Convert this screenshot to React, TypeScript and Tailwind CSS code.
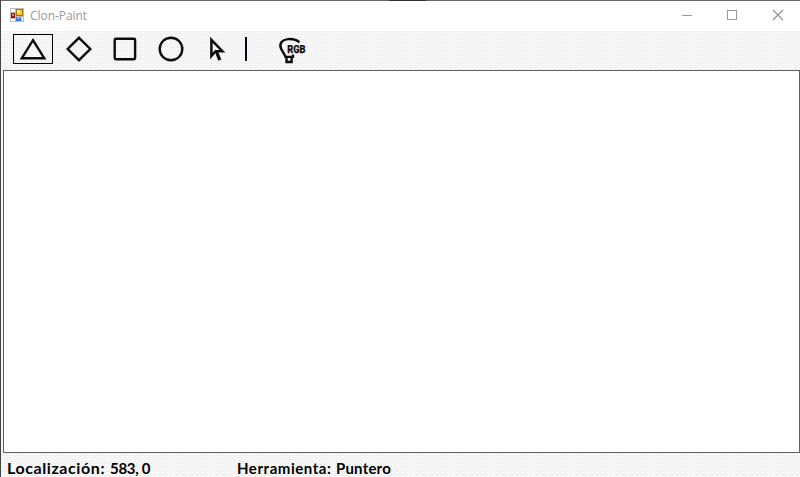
import type { ReactNode } from "react";

function FormIcon() {
  return (
    <svg width="14" height="14" viewBox="0 0 14 14" shapeRendering="crispEdges">
      <rect width="14" height="14" fill="#bdbdbd" />
      <rect x="1" y="1" width="4" height="3" fill="#fff" />
      <rect x="1" y="11" width="4" height="2" fill="#fff" />
      <rect x="12" y="9" width="1" height="4" fill="#fff" />
      <rect x="6" y="1" width="7" height="7" fill="#a87400" />
      <rect x="7" y="2" width="5" height="5" fill="#f8c83c" />
      <rect x="7" y="2" width="3" height="3" fill="#ffe69a" />
      <rect x="1" y="5" width="4" height="5" fill="#a40f0f" />
      <rect x="2" y="6" width="2" height="2" fill="#e98375" />
      <rect x="6" y="9" width="5" height="4" fill="#3978dc" />
      <rect x="7" y="9" width="3" height="2" fill="#82b3f5" />
    </svg>
  );
}

function Tool({ label, selected, children }: { label: string; selected?: boolean; children: ReactNode }) {
  return (
    <button
      aria-label={label}
      className={`flex h-[30px] w-10 items-center justify-center border ${selected ? "border-black" : "border-transparent"}`}
    >
      <svg width="38" height="28" viewBox="0 0 38 28" fill="none" stroke="#0c0c0c" strokeWidth="2.4">
        {children}
      </svg>
    </button>
  );
}

const caption = "flex h-[30px] w-[46px] items-center justify-center";

// Fine dashed dither drawn behind the toolbar and the status bar.
const dither =
  "bg-[#f1f1f1] bg-[image:conic-gradient(at_3px_1px,transparent_75%,#fff_0),conic-gradient(at_3px_1px,transparent_75%,#fff_0)] bg-[length:5px_4px] bg-[position:0_0,2px_2px]";

export default function App() {
  return (
    <div className={`flex h-[477px] w-[800px] flex-col overflow-hidden border-l border-[#454545] text-black ${dither}`}>
      <div className="flex h-px shrink-0 bg-[#666]">
        <div className="ml-[388px] w-[37px] bg-[#333]" />
      </div>
      <header className="flex h-[30px] shrink-0 bg-white">
        <div className="flex flex-1 pl-[9px] pt-[7px]">
          <FormIcon />
          <span className="ml-[6px] font-['Open_Sans','Noto_Sans',sans-serif] text-[12px] leading-[16px] tracking-[-0.05px] text-[#999]">
            Clon-Paint
          </span>
        </div>
        <div className="-mr-px flex h-[28px] items-center">
          <div className={caption}>
            <svg width="12" height="12" viewBox="0 0 12 12" shapeRendering="crispEdges">
              <path d="M2 6.5h10" stroke="#999" />
            </svg>
          </div>
          <div className={caption}>
            <svg width="12" height="12" viewBox="0 0 12 12" shapeRendering="crispEdges">
              <path d="M1.5 1.5h9v9h-9z" stroke="#999" fill="none" />
            </svg>
          </div>
          <div className={caption}>
            <svg width="12" height="12" viewBox="0 0 12 12">
              <path d="M1 1l10 10M11 1L1 11" stroke="#909090" strokeWidth="1.1" />
            </svg>
          </div>
        </div>
      </header>
      <nav className="flex h-[39px] shrink-0 items-start gap-[6px] pl-3 pt-[3px]">
        <Tool label="Triángulo" selected>
          <path d="M19 5.2L30.2 23.2H7.8z" />
        </Tool>
        <Tool label="Rombo">
          <path d="M19 2.8L30.3 14L19 25.2L7.7 14z" />
        </Tool>
        <Tool label="Cuadrado">
          <rect x="8.7" y="3.8" width="20.4" height="20.4" rx="1.2" />
        </Tool>
        <Tool label="Círculo">
          <circle cx="19" cy="14" r="11.3" />
        </Tool>
        <Tool label="Puntero">
          <path d="M13.4 4.8V21L17.6 16.2H24.4z" strokeWidth="2.5" />
          <path d="M18.2 16.2L21.8 25.2" strokeWidth="3.2" />
        </Tool>
        <div className="ml-[2px] mt-[3px] h-6 w-[2px] bg-[#080818]" />
        <button aria-label="Color" className="ml-[24px] mt-[2px] flex h-[28px] w-[32px]">
          <svg width="32" height="28" viewBox="0 0 32 28" fill="none" stroke="#0c0c0c" strokeWidth="2.4">
            <path d="M22.4 6.3C19.5 3.5 16 2.9 11.5 3.1C4.5 3.6 2 8 4 12.6C5.2 15.3 7.3 17.3 8.4 20.6" />
            <path d="M7.4 20.9H16V18.5M9.5 21V26H14.6V21" strokeWidth="2.4" />
            <text
              x="10.2"
              y="17.2"
              textLength="18.2"
              lengthAdjust="spacingAndGlyphs"
              fontFamily="Roboto, sans-serif"
              fontWeight="800"
              fontSize="10.6"
              fill="#0c0c0c"
              stroke="#0c0c0c"
              strokeWidth="0.25"
            >
              RGB
            </text>
          </svg>
        </button>
      </nav>
      <main className="ml-[2px] h-[383px] shrink-0 border border-[#606060] bg-white" />
      <footer className="flex h-[24px] shrink-0 pl-[6px] pt-[5px] font-['Lato',sans-serif] text-[15px] font-bold leading-[20px]">
        <div className="flex w-[230px] whitespace-nowrap">
          <span className="w-[103px] text-[16px] tracking-[0.58px]">Localización:</span>
          <span className="tracking-[-0.3px]">583, 0</span>
        </div>
        <div className="flex whitespace-nowrap">
          <span className="w-[99px] tracking-[0.55px]">Herramienta:</span>
          <span className="tracking-[0.2px]">Puntero</span>
        </div>
      </footer>
    </div>
  );
}
